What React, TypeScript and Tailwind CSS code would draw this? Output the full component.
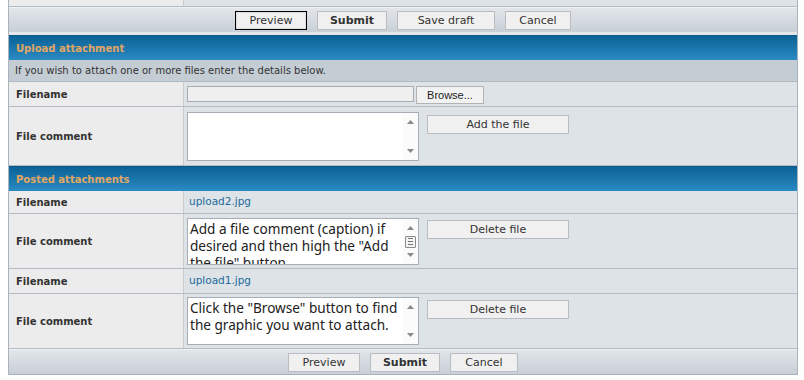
import React from "react";

const Btn = ({ children, w, bold, focus }: { children: React.ReactNode; w: number; bold?: boolean; focus?: boolean }) => (
  <button
    type="button"
    style={{ width: w }}
    className={
      "block h-[19px] bg-[#f0f0f0] text-[11px] leading-none text-[#333] font-['DejaVu_Sans',Verdana,sans-serif] " +
      (focus ? "border border-black shadow-[inset_0_0_0_1px_#dcdcdc] " : "border border-[#b9bdc1] ") +
      (bold ? "font-bold" : "")
    }
  >
    {children}
  </button>
);

const Up = () => (
  <svg width="7" height="4" viewBox="0 0 7 4"><path d="M0 4 L3.5 0 L7 4Z" fill="#8a8a8a" /></svg>
);
const Down = () => (
  <svg width="7" height="4" viewBox="0 0 7 4"><path d="M0 0 L3.5 4 L7 0Z" fill="#8a8a8a" /></svg>
);

const TextBox = ({ h, text, thumb }: { h: number; text?: string; thumb?: boolean }) => (
  <div style={{ height: h }} className="w-[232px] shrink-0 flex border border-[#a6adb4] bg-white">
    <textarea
      readOnly
      defaultValue={text ?? ""}
      className="flex-1 min-w-0 resize-none overflow-hidden outline-none bg-white pl-[2px] pr-0 pt-[1px] text-[13.6px] leading-[17px] text-[#222] font-['Noto_Sans',sans-serif]"
    />
    <div className="w-[15px] flex flex-col items-center justify-between py-[7px] bg-[#fbfbfb]">
      <Up />
      {thumb && (
        <div className="w-[11px] h-[12px] border border-[#8c8c8c] rounded-[1px] flex flex-col justify-center gap-[2px] px-[2px] bg-[#f3f3f3]">
          <div className="h-px bg-[#777]" />
          <div className="h-px bg-[#777]" />
          <div className="h-px bg-[#777]" />
        </div>
      )}
      <Down />
    </div>
  </div>
);

const Row = ({ label, h, children, top }: { label: string; h: number; children: React.ReactNode; top?: number }) => (
  <div style={{ height: h }} className="flex border-b border-[#b3bcc4]">
    <div className="w-[175px] shrink-0 bg-[#ececec] border-r border-[#c6ccd2] flex items-center pl-[7px] text-[10px] font-bold text-[#333]">
      {label}
    </div>
    <div style={{ paddingTop: top ?? 0 }} className="flex-1 bg-[#dee3e7] pl-[3px] flex items-start">
      {children}
    </div>
  </div>
);

const Header = ({ children }: { children: React.ReactNode }) => (
  <div className="h-[25px] flex items-center pl-[7px] bg-gradient-to-b from-[#0a6296] to-[#2a8bc3] border-t border-[#0a5a88] text-[10px] font-bold text-[#e2a663]">
    {children}
  </div>
);

const Bar = ({ children }: { children: React.ReactNode }) => (
  <div className="h-[25px] flex items-center justify-center gap-[10px] bg-gradient-to-b from-[#e2e6ea] to-[#c8cfd6] border-t border-[#eef1f3]">
    {children}
  </div>
);

export default function App() {
  return (
    <div className="w-[804px] h-[380px] bg-white font-['DejaVu_Sans',Verdana,sans-serif] text-[#333]">
      <div className="ml-[8px] w-[790px] border-l border-r border-b border-[#a9b3bc]">
        <div className="h-[7px] flex border-b border-[#b3bcc4]">
          <div className="w-[175px] bg-[#ececec] border-r border-[#c6ccd2]" />
          <div className="flex-1 bg-[#dee3e7]" />
        </div>
        <Bar>
          <Btn w={72} focus>Preview</Btn>
          <Btn w={70} bold>Submit</Btn>
          <Btn w={98}>Save draft</Btn>
          <Btn w={66}>Cancel</Btn>
        </Bar>
        <div className="h-[3px] bg-[#e3e7eb]" />
        <Header>Upload attachment</Header>
        <div className="h-[22px] flex items-center pl-[6px] bg-[#c5cdd4] border-b border-[#b0b9c1] text-[10px] text-[#333]">
          If you wish to attach one or more files enter the details below.
        </div>
        <Row label="Filename" h={25} top={4}>
          <div className="w-[227px] h-[16px] border border-[#a6adb4] bg-[#efefef]" />
          <button type="button" className="block ml-[2px] w-[68px] h-[18px] border border-[#b0b4b8] bg-[#f2f2f2] text-[11px] leading-none text-[#222] font-['Liberation_Sans',Arial,sans-serif]">
            Browse...
          </button>
        </Row>
        <Row label="File comment" h={59} top={5}>
          <TextBox h={49} />
          <div className="flex ml-[8px] mt-[3px]">
            <Btn w={142}>Add the file</Btn>
          </div>
        </Row>
        <Header>Posted attachments</Header>
        <Row label="Filename" h={23}>
          <div className="h-full flex items-center pl-[2px] text-[10.5px] text-[#1d6a9b]">upload2.jpg</div>
        </Row>
        <Row label="File comment" h={55} top={4}>
          <TextBox h={47} thumb text={'Add a file comment (caption) if desired and then high the "Add the file" button.'} />
          <div className="flex ml-[8px] mt-[2px]">
            <Btn w={142}>Delete file</Btn>
          </div>
        </Row>
        <Row label="Filename" h={25}>
          <div className="h-full flex items-center pl-[2px] text-[10.5px] text-[#1d6a9b]">upload1.jpg</div>
        </Row>
        <Row label="File comment" h={55} top={3}>
          <TextBox h={48} text={'Click the "Browse" button to find the graphic you want to attach.'} />
          <div className="flex ml-[8px] mt-[3px]">
            <Btn w={142}>Delete file</Btn>
          </div>
        </Row>
        <Bar>
          <Btn w={72}>Preview</Btn>
          <Btn w={70} bold>Submit</Btn>
          <Btn w={68}>Cancel</Btn>
        </Bar>
      </div>
    </div>
  );
}
